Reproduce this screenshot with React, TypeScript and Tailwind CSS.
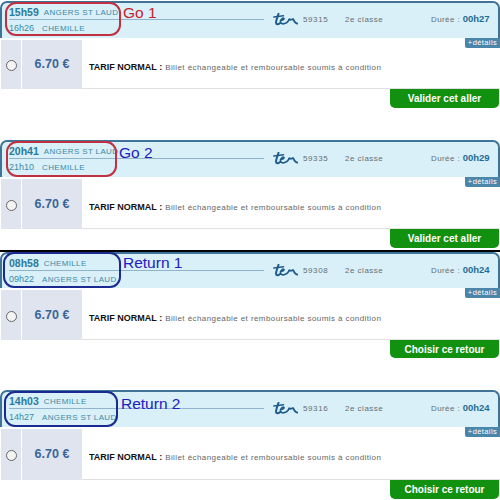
type Trip = {
  dep: string;
  depCity: string;
  arr: string;
  arrCity: string;
  num: string;
  dur: string;
  action: string;
  label: string;
  labelClass: string;
  ringClass: string;
  headClass: string;
  bodyClass: string;
  btnClass: string;
};

const trips: Trip[] = [
  {
    dep: "15h59", depCity: "ANGERS ST LAUD", arr: "16h26", arrCity: "CHEMILLE",
    num: "59315", dur: "00h27", action: "Valider cet aller", label: "Go 1",
    labelClass: "text-[#c8202c] left-[121px] top-[-2px]",
    ringClass: "border-[#c03040] left-[3px] top-[-1px] w-[116px] h-[34px]",
    headClass: "h-[37px]", bodyClass: "h-[51px]", btnClass: "h-[19px]",
  },
  {
    dep: "20h41", depCity: "ANGERS ST LAUD", arr: "21h10", arrCity: "CHEMILLE",
    num: "59335", dur: "00h29", action: "Valider cet aller", label: "Go 2",
    labelClass: "text-[#2020c0] left-[117px] top-[-1px]",
    ringClass: "border-[#c03040] left-[4px] top-[-1px] w-[111px] h-[36px]",
    headClass: "h-[37px]", bodyClass: "h-[52px]", btnClass: "h-[19px]",
  },
  {
    dep: "08h58", depCity: "CHEMILLE", arr: "09h22", arrCity: "ANGERS ST LAUD",
    num: "59308", dur: "00h24", action: "Choisir ce retour", label: "Return 1",
    labelClass: "text-[#2020c0] left-[121px] top-[-3px]",
    ringClass: "border-[#1a2a90] left-[1px] top-[-2px] w-[118px] h-[36px]",
    headClass: "h-[36px]", bodyClass: "h-[52px]", btnClass: "h-[18px]",
  },
  {
    dep: "14h03", depCity: "CHEMILLE", arr: "14h27", arrCity: "ANGERS ST LAUD",
    num: "59316", dur: "00h24", action: "Choisir ce retour", label: "Return 2",
    labelClass: "text-[#2020c0] left-[119px] top-[0px]",
    ringClass: "border-[#1a2a90] left-[2px] top-[-1px] w-[114px] h-[36px]",
    headClass: "h-[37px]", bodyClass: "h-[53px]", btnClass: "h-[19px]",
  },
];

function TerLogo() {
  return (
    <svg width="25" height="13" viewBox="0 0 25 13" fill="none" stroke="#1f5c8c" strokeLinecap="round" strokeLinejoin="round" className="shrink-0">
      <path d="M5.5 0.8 C4.5 4 3 7.5 3 9.5 C3 11.8 5 11.5 7 10.2" strokeWidth="2" />
      <path d="M0.8 4 L10.5 2.8" strokeWidth="1.5" />
      <path d="M7.5 7.5 C9.5 7.5 11.5 6.5 11 5.5 C10 4.5 7.5 6.5 7.5 8.8 C7.5 11 10.5 11.5 13.5 9.8 C14.8 9 15.6 7.6 16.2 6.4" strokeWidth="1.7" />
      <path d="M16.2 6.4 C17 6.8 18.5 6.8 20 6 C21 7.2 21.8 10.6 24.5 10.6" strokeWidth="1.9" />
    </svg>
  );
}

function TripCard({ trip }: { trip: Trip }) {
  return (
    <section className="relative">
      <div className={`relative ${trip.headClass} bg-[#d9f0f8] border-t-2 border-x-2 border-b-0 border-[#3f7398] rounded-t-[7px]`}>
        <div className="absolute left-[7px] right-[234px] top-[16px] h-px bg-[#8fb4cc]" />
        <div className="flex h-full">
          <div className="relative w-[120px] pl-[7px] pt-[2px] whitespace-nowrap">
            <div className="flex items-center h-[16px] gap-[5px]">
              <span className="text-[10.5px] font-bold text-[#2c7a9c]">{trip.dep}</span>
              <span className="text-[8px] tracking-[0.35px] text-[#3a8aa8]">{trip.depCity}</span>
            </div>
            <div className="flex items-center h-[15px] gap-[8px]">
              <span className="text-[9px] text-[#3a8aa8]">{trip.arr}</span>
              <span className="text-[8px] tracking-[0.35px] text-[#3a8aa8]">{trip.arrCity}</span>
            </div>
          </div>
          <div className="flex items-center h-[15px] mt-[9px] pl-[151px] whitespace-nowrap">
            <TerLogo />
            <span className="ml-[5px] w-[42px] text-[8px] tracking-[0.6px] text-[#666e74]">{trip.num}</span>
            <span className="w-[86px] text-[8px] tracking-[0.5px] text-[#666e74]">2e classe</span>
            <span className="text-[8px] tracking-[0.4px] text-[#666e74]">
              Durée : <b className="text-[9.5px] tracking-normal text-[#1f6c96]">{trip.dur}</b>
            </span>
          </div>
        </div>
        <span className={`absolute text-[15.5px] leading-[24px] ${trip.labelClass}`}>{trip.label}</span>
        <div className={`absolute border-2 rounded-[11px] ${trip.ringClass}`} />
      </div>
      <div className={`relative flex ${trip.bodyClass} pt-[2px]`}>
        <div className="flex w-[20px] ml-px pt-[2px] items-center justify-center bg-[#e0e4ee]">
          <div className="w-[11px] h-[11px] rounded-full border border-[#666] bg-[#f4f4f4]" />
        </div>
        <div className="flex w-[60px] ml-px items-center justify-center bg-[#e0e4ee] text-[12.5px] font-bold text-[#38659a]">
          6.70 €
        </div>
        <div className="flex flex-1 items-center pl-[7px] pt-[8px] border-b border-[#e0e0e0] text-[8px] tracking-[0.42px] text-[#666] whitespace-nowrap">
          <b className="text-[9px] tracking-normal text-[#111] mr-[3px]">TARIF NORMAL :</b>
          Billet échangeable et remboursable soumis à condition
        </div>
        <span className="absolute right-0 top-0 h-[10px] w-[35px] bg-[#4a85aa] rounded-bl-[2px] text-center text-[7.5px] leading-[10px] tracking-[0.4px] text-white">
          +détails
        </span>
      </div>
      <div className="flex justify-end pr-px">
        <button className={`w-[109px] ${trip.btnClass} bg-[#129010] rounded-b-[5px] text-[10px] font-bold text-white`}>
          {trip.action}
        </button>
      </div>
    </section>
  );
}

export default function App() {
  return (
    <div className="w-[500px] h-[500px] overflow-hidden bg-white font-['Liberation_Sans',Arial,sans-serif]">
      <div className="pt-[1px]">
        <TripCard trip={trips[0]} />
      </div>
      <div className="mt-[32px]">
        <TripCard trip={trips[1]} />
      </div>
      <div className="mt-[2px] h-[2px] bg-black" />
      <TripCard trip={trips[2]} />
      <div className="mt-[32px]">
        <TripCard trip={trips[3]} />
      </div>
    </div>
  );
}
